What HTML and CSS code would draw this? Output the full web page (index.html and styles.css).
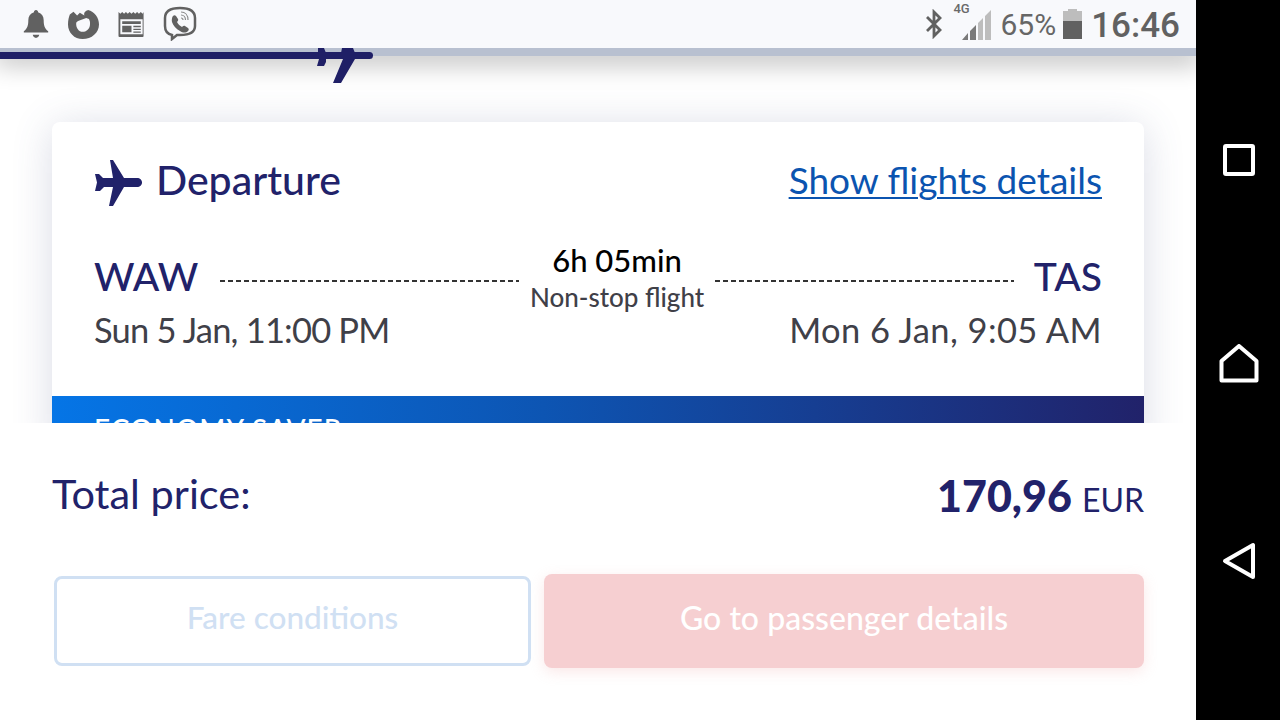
FILE: index.html
```html
<!DOCTYPE html>
<html lang="en">
<head>
<meta charset="utf-8">
<title>Flight summary</title>
<link rel="stylesheet" href="styles.css">
</head>
<body>
<div class="screen">
  <div class="app">
    <header class="status">
      <div class="status-icons">
        <svg class="ic-bell" viewBox="0 0 28 32"><path d="M14 1c1.400 0 2.200 1 2.200 2.400 4 1.200 6 4.400 6 8.600 0 5 .8 8.600 4.800 11.800v1.200H1v-1.200C5 20.600 5.800 17 5.800 12c0-4.200 2-7.400 6-8.600C11.800 2 12.600 1 14 1zM10.500 27.500h7c-.4 2-1.800 3.300-3.500 3.300s-3.100-1.300-3.500-3.300z"/></svg>
        <svg class="ic-fox" viewBox="0 0 34 34"><path fill-rule="evenodd" d="M2 6 6 3l4 4 3-3 5 3c-1-3 1-5 4-6 7 2 12 8 12 16 0 9-8 16-18 16C7 33 0 26 0 17 0 12 1 9 2 6zM9 15c1-2 3-2 5-3l6-2 3 1c1 2 1.500 4 1 7-.5 4-4 7-8 7-4 0-7.500-4-7-10z"/></svg>
        <svg class="ic-news" viewBox="0 0 30 28"><path fill-rule="evenodd" d="M1 1l2 2 2-2 2 2 2-2 2 2 2-2 2 2 2-2 2 2 2-2 2 2 2-2 2 2 1-2v26a1 1 0 0 1-1 1H2a1 1 0 0 1-1-1zM3 9v16h24V9zM5 11h20v3H5zM5 16h10v7H5zM17 16h8v1.500h-8zM17 19h8v1.500h-8zM17 22h8v1.500h-8z"/></svg>
        <svg class="ic-viber" viewBox="0 0 34 36">
          <path class="v-line" d="M17 3C8 3 2 6 2 13v8c0 5 2 8 7 9v4l5-4h3c9 0 15-3 15-9v-8C32 6 26 3 17 3z"/>
          <path d="M10 11c1-1 2-1 3 0l2 3c.5 1 0 2-1 3 1 2 3 4 5 5 1-1 2-1.500 3-1l3 2c1 1 1 2 0 3-2 2-5 2-8 0-4-2-7-6-8-9-.5-2 0-5 1-6z"/>
          <path class="v-thin" d="M18 7c4 0 7 3 7 8M18 10c2.500 0 4.500 2 4.500 5M18 13c1 0 2 1 2 2"/>
        </svg>
      </div>
      <div class="status-right">
        <svg class="ic-bt" viewBox="0 0 20 30"><path class="bt-line" d="M3 8l13 13-6 6V3l6 6L3 22"/></svg>
        <div class="signal">
          <span class="net">4G</span>
          <svg class="ic-signal" viewBox="0 0 30 30"><path class="sig-off" d="M30 0v30h-6V6zM22 8v22h-5V13z"/><path class="sig-on" d="M15 15v15H9V21zM7 23v7H1z"/></svg>
        </div>
        <span class="pct">65%</span>
        <svg class="ic-batt" viewBox="0 0 19 30"><path class="batt-off" d="M5 0h9v2h5v11H0V2h5z"/><rect class="batt-on" y="12" width="19" height="18"/></svg>
        <span class="clock">16:46</span>
      </div>
    </header>
    <div class="content">
      <div class="strip"></div>
      <div class="progress">
        <svg class="progress-plane" viewBox="0 0 56 40"><path d="M1 4h6l2 5h15l1-5h11l2 5h9v6H38L24 39h-8l10-24H9v3l-2 4H0l2-7-1-7z"/></svg>
      </div>
      <section class="card">
        <div class="card-body">
          <div class="card-head">
            <div class="head-title">
              <svg class="ic-plane" viewBox="0 0 48 46"><path d="M16 0h3l11 18h13c3 0 5 2 5 4.500S46 27 43 27H30L19 46h-4l4-19h-9l-4 4H1l2-8.500L1 14h4l4 4h10z"/></svg>
              <h2>Departure</h2>
            </div>
            <a class="details" href="#">Show flights details</a>
          </div>
          <div class="route">
            <div class="code">WAW</div>
            <div class="dots dots-left"></div>
            <div class="duration">
              <div class="time">6h 05min</div>
              <div class="stops">Non-stop flight</div>
            </div>
            <div class="dots dots-right"></div>
            <div class="code">TAS</div>
          </div>
          <div class="dates">
            <div class="when when-start">Sun 5 Jan, 11:00 PM</div>
            <div class="when when-end">Mon 6 Jan, 9:05 AM</div>
          </div>
        </div>
        <div class="fare"><span>ECONOMY SAVER</span></div>
      </section>
    </div>
    <footer class="summary">
      <div class="total">
        <span class="total-label">Total price:</span>
        <span class="total-value"><b>170,96</b><span class="cur">EUR</span></span>
      </div>
      <div class="actions">
        <button class="btn btn-ghost">Fare conditions</button>
        <button class="btn btn-main">Go to passenger details</button>
      </div>
    </footer>
  </div>
  <nav class="navbar">
    <svg class="nav-ic" viewBox="0 0 34 34"><rect x="3" y="3" width="28" height="28" rx="1"/></svg>
    <svg class="nav-ic nav-home" viewBox="0 0 40 40"><path d="M2.500 36.500V17L20 2l17.500 15v19.500z"/></svg>
    <svg class="nav-ic nav-back" viewBox="0 0 34 38"><path d="M3 19 31 3v32z"/></svg>
  </nav>
</div>
</body>
</html>
```
FILE: styles.css
```css
* { box-sizing: border-box; }
html, body { margin: 0; height: 100%; background: #000; }
body { font-family: "Lato", "Liberation Sans", sans-serif; color: #21226a; overflow: hidden; }
.screen { width: 1280px; height: 720px; display: flex; }
.app { width: 1196px; height: 720px; display: flex; flex-direction: column; background: #fff; }
.navbar { width: 84px; background: #000; display: flex; flex-direction: column; align-items: center; padding: 143px 0 0 1px; }
.nav-ic { fill: none; stroke: #fff; stroke-width: 4; stroke-linejoin: round; width: 34px; height: 34px; flex: none; }
.nav-home { width: 40px; height: 40px; margin-top: 167px; }
.nav-back { width: 34px; height: 38px; margin-top: 158px; }

.status { height: 48px; flex: none; background: #f8f9fc; display: flex; justify-content: space-between; padding: 0 16px 0 22px; }
.status-icons { display: flex; align-items: flex-start; }
.status-icons svg { fill: #616161; display: block; flex: none; }
.ic-bell { width: 28px; height: 30px; margin-top: 9px; }
.ic-fox { width: 33px; height: 31px; margin: 9px 0 0 17px; }
.ic-news { width: 29px; height: 26px; margin: 11px 0 0 17px; }
.ic-viber { width: 34px; height: 36px; margin: 5px 0 0 17px; }
.v-line { fill: none; stroke: #616161; stroke-width: 2.500; }
.v-thin { fill: none; stroke: #8a8a8a; stroke-width: 1.200; }
.status-right { display: flex; align-items: flex-start; color: #616161; }
.ic-bt { width: 20px; height: 30px; margin-top: 9px; }
.bt-line { fill: none; stroke: #616161; stroke-width: 2.800; }
.signal { position: relative; width: 32px; height: 40px; margin-left: 9px; }
.net { position: absolute; left: 0; top: 2px; font: 500 13px/14px "Roboto", sans-serif; color: #6a6a6a; }
.ic-signal { position: absolute; left: 8px; top: 10px; width: 30px; height: 30px; }
.sig-off { fill: #bdbdbd; }
.sig-on { fill: #7a7a7a; }
.pct { margin-left: 15px; font: 400 30px/50px "Roboto", sans-serif; color: #666; }
.ic-batt { width: 19px; height: 30px; margin: 9px 0 0 7px; }
.batt-off { fill: #bdbdbd; }
.batt-on { fill: #616161; }
.clock { margin-left: 9px; font: 500 35px/52px "Roboto", sans-serif; color: #616161; }

.content { position: relative; height: 375px; flex: none; overflow: hidden; background: #fff; }
.strip { height: 8px; background: #b8c0d0; box-shadow: 0 2px 26px 5px rgba(0,0,0,.3); }
.progress { position: absolute; left: 0; top: 4px; width: 373px; height: 7px; background: #1f1f66; border-radius: 0 4px 4px 0; }
.progress-plane { position: absolute; right: 0; top: -8px; width: 56px; height: 40px; fill: #1f1f66; }

.card { position: absolute; left: 52px; top: 74px; width: 1092px; background: #fff; border-radius: 8px 8px 0 0; box-shadow: 0 4px 40px rgba(70,80,130,.2); }
.card-body { padding: 36px 42px 0; height: 274px; }
.card-head { display: flex; justify-content: space-between; align-items: center; height: 48px; }
.head-title { display: flex; align-items: center; gap: 14px; }
.ic-plane { width: 48px; height: 46px; fill: #21226a; flex: none; margin-top: 2px; }
h2 { margin: 0 0 4px; font-size: 41px; font-weight: 500; line-height: 48px; }
.details { font-size: 37px; line-height: 44px; margin-bottom: 4px; color: #0b54b0; text-decoration-thickness: 2px; text-underline-offset: 3px; }
.route { display: flex; align-items: center; margin-top: 35px; height: 72px; }
.code { flex: none; font-size: 39px; line-height: 50px; font-weight: 500; color: #21226a; padding-bottom: 2px; }
.dates { display: flex; justify-content: space-between; }
.when { font-size: 34.500px; line-height: 34px; color: #3f4048; }
.when-start { letter-spacing: -.8px; }
.when-end { letter-spacing: .4px; }
.dots { flex: 1; height: 2px; margin-top: 8px; background: repeating-linear-gradient(90deg, #333 0 5px, transparent 5px 8px); }
.dots-left { margin-left: 22px; }
.dots-right { margin-right: 20px; }
.duration { width: 196px; text-align: center; flex: none; }
.time { font-size: 31px; line-height: 38px; margin-bottom: 1px; color: #000; font-weight: 500; }
.stops { font-size: 26px; line-height: 34px; color: #3f4048; font-weight: 500; }
.fare { height: 60px; padding: 18px 42px; background: linear-gradient(90deg, #0575e6, #0d55b3 45%, #21226a 100%); color: #fff; font-size: 28px; font-weight: 500; letter-spacing: 1px; line-height: 30px; }

.summary { flex: 1; position: relative; background: #fff; padding: 42px 52px 0; }
.total { display: flex; justify-content: space-between; align-items: flex-start; }
.total-label { font-size: 41.500px; line-height: 56px; color: #21226a; }
.total-value { line-height: 56px; padding-top: 3px; }
.total-value b { font-size: 43px; font-weight: 900; }
.cur { font-size: 32px; margin-left: 10px; }
.actions { display: flex; gap: 13px; margin-top: 40px; align-items: center; }
.btn { font-family: inherit; font-size: 32px; font-weight: 500; border-radius: 8px; padding: 0 0 8px; }
.btn-ghost { width: 477px; height: 90px; margin-left: 2px; background: #fff; border: 3px solid #d0e0f3; color: #d0e0f3; font-size: 31.500px; }
.btn-main { flex: 1; height: 94px; background: #f6cfd1; border: 0; color: #fff; box-shadow: 0 4px 14px rgba(240,180,180,.3); }
```
